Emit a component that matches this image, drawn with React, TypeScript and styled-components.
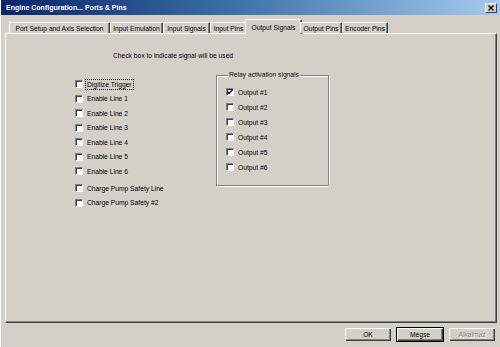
import React from 'react';
import styled, { createGlobalStyle } from 'styled-components';

const GlobalStyle = createGlobalStyle`
  html, body {
    margin: 0;
    padding: 0;
    background: #d4d0c8;
  }
  * {
    box-sizing: border-box;
  }
`;

const Frame = styled.div`
  width: 500px;
  height: 347px;
  display: flex;
  flex-direction: column;
  background: #d4d0c8;
  font-family: "Liberation Sans", Arial, sans-serif;
  font-size: 6.7px;
  color: #000;
  padding: 0 0 0 4px;
  border-left: 1px solid #fff;
`;

const TitleBar = styled.div`
  height: 15px;
  flex: none;
  display: flex;
  align-items: center;
  justify-content: space-between;
  margin-left: -4px;
  padding: 0 3px 0 5px;
  background: linear-gradient(to right, #0a246a 0%, #3a6ea5 45%, #a6caf0 100%);
  color: #fff;
  font-weight: bold;
  font-size: 7px;
`;

const CloseButton = styled.div`
  width: 12px;
  height: 10px;
  display: flex;
  align-items: center;
  justify-content: center;
  background: #d4d0c8;
  border-top: 1px solid #fff;
  border-left: 1px solid #fff;
  border-right: 1px solid #404040;
  border-bottom: 1px solid #404040;
`;

const TabStrip = styled.div`
  flex: none;
  height: 14px;
  margin-top: 4px;
  display: flex;
  align-items: flex-end;
  padding-left: 4px;
  position: relative;
  z-index: 1;
`;

const Tab = styled.div<{ $active?: boolean; $w: number }>`
  width: ${p => (p.$active ? p.$w + 4 : p.$w)}px;
  height: ${p => (p.$active ? '15px' : '11px')};
  margin: ${p => (p.$active ? '0 -2px -1px -2px' : '0')};
  display: flex;
  align-items: center;
  justify-content: center;
  background: #d4d0c8;
  border-top: 1px solid #fff;
  border-left: 1px solid #fff;
  border-right: 1px solid #404040;
  box-shadow: inset -1px 0 #808080;
  border-radius: 1px 1px 0 0;
  white-space: nowrap;
`;

const Panel = styled.div`
  flex: none;
  height: 290px;
  margin-right: 3px;
  border-top: 1px solid #fff;
  border-left: 1px solid #fff;
  border-right: 1px solid #404040;
  border-bottom: 1px solid #404040;
  box-shadow: inset -1px -1px #808080;
  padding: 17px 0 0 69px;
`;

const Instruction = styled.div`
  line-height: 10px;
  padding-left: 38px;
`;

const Columns = styled.div`
  display: flex;
  align-items: flex-start;
  margin-top: 9px;
`;

const LeftColumn = styled.div`
  width: 141px;
  margin-top: 6.75px;
  display: flex;
  flex-direction: column;
`;

const Row = styled.div<{ $h: number; $gap?: number }>`
  height: ${p => p.$h}px;
  margin-top: ${p => p.$gap ?? 0}px;
  display: flex;
  align-items: center;
  gap: 3px;
  white-space: nowrap;
`;

const Box = styled.span`
  width: 8px;
  height: 8px;
  flex: none;
  display: flex;
  align-items: center;
  justify-content: center;
  background: #fff;
  border-top: 1px solid #808080;
  border-left: 1px solid #808080;
  border-right: 1px solid #fff;
  border-bottom: 1px solid #fff;
  box-shadow: inset 1px 1px #404040;
`;

const Label = styled.span<{ $focus?: boolean }>`
  padding: 0 1px;
  line-height: 9px;
  outline: ${p => (p.$focus ? '1px dotted #000' : 'none')};
`;

const Group = styled.fieldset`
  margin: 0;
  width: 113px;
  height: 116px;
  padding: 4.5px 0 0 9px;
  border: 1px solid #808080;
  box-shadow: inset 1px 1px #fff, 1px 1px 0 #fff;
`;

const Legend = styled.legend`
  margin-left: 2px;
  padding: 0 1px;
  line-height: 10px;
`;

const Footer = styled.div`
  flex: 1;
  display: flex;
  justify-content: flex-end;
  align-items: flex-start;
  gap: 4px;
  padding: 4px 4px 0 0;
`;

const Button = styled.div<{ $default?: boolean; $disabled?: boolean }>`
  width: 48px;
  height: 15px;
  display: flex;
  align-items: center;
  justify-content: center;
  background: #d4d0c8;
  border: 1px solid ${p => (p.$default ? '#000' : '#d4d0c8')};
  box-shadow: inset 1px 1px #fff, inset -1px -1px #404040, inset -2px -2px #808080;
  color: ${p => (p.$disabled ? '#808080' : '#000')};
  text-shadow: ${p => (p.$disabled ? '1px 1px 0 #fff' : 'none')};
`;

const Check = () => (
  <svg width="6" height="6" viewBox="0 0 6 6">
    <polyline points="0.5,2.5 2,4.2 5.5,0.8" fill="none" stroke="#000" strokeWidth="1.3" />
  </svg>
);

const CheckRow: React.FC<{ label: string; h: number; gap?: number; checked?: boolean; focus?: boolean }> = ({
  label,
  h,
  gap,
  checked,
  focus
}) => (
  <Row $h={h} $gap={gap}>
    <Box>{checked && <Check />}</Box>
    <Label $focus={focus}>{label}</Label>
  </Row>
);

const tabs: [string, number][] = [
  ['Port Setup and Axis Selection', 101],
  ['Input Emulation', 53],
  ['Input Signals', 47],
  ['Input Pins', 37],
  ['Output Signals', 53],
  ['Output Pins', 42],
  ['Encoder Pins', 46]
];

const lines = ['Enable Line 1', 'Enable Line 2', 'Enable Line 3', 'Enable Line 4', 'Enable Line 5', 'Enable Line 6'];

const outputs = ['Output #1', 'Output #2', 'Output #3', 'Output #4', 'Output #5', 'Output #6'];

export default function App() {
  return (
    <>
      <GlobalStyle />
      <Frame>
        <TitleBar>
          <span>Engine Configuration... Ports &amp; Pins</span>
          <CloseButton>
            <svg width="6" height="6" viewBox="0 0 6 6">
              <path d="M0.5 0.5 L5.5 5.5 M5.5 0.5 L0.5 5.5" stroke="#000" strokeWidth="1.4" />
            </svg>
          </CloseButton>
        </TitleBar>
        <TabStrip>
          {tabs.map(([t, w]) => (
            <Tab key={t} $w={w} $active={t === 'Output Signals'}>
              {t}
            </Tab>
          ))}
        </TabStrip>
        <Panel>
          <Instruction>Check box to indicate signal will be used</Instruction>
          <Columns>
            <LeftColumn>
              <CheckRow label="Digitize Trigger" h={14.5} focus />
              {lines.map(l => (
                <CheckRow key={l} label={l} h={14.5} />
              ))}
              <CheckRow label="Charge Pump Safety Line" h={14.5} gap={2.5} />
              <CheckRow label="Charge Pump Safety #2" h={14.5} />
            </LeftColumn>
            <Group>
              <Legend>Relay activation signals</Legend>
              {outputs.map((o, i) => (
                <CheckRow key={o} label={o} h={15} checked={i === 0} />
              ))}
            </Group>
          </Columns>
        </Panel>
        <Footer>
          <Button>OK</Button>
          <Button $default>Mégse</Button>
          <Button $disabled>Alkalmaz</Button>
        </Footer>
      </Frame>
    </>
  );
}
